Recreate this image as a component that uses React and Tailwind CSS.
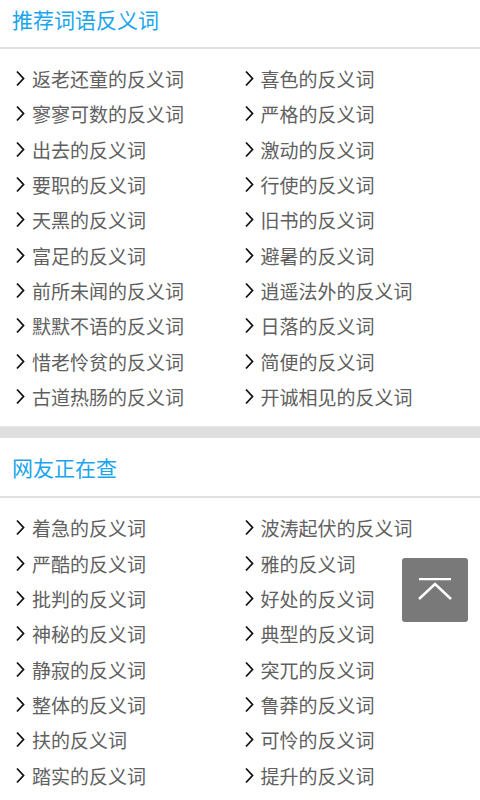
const recommended = [
  "返老还童", "喜色",
  "寥寥可数", "严格",
  "出去", "激动",
  "要职", "行使",
  "天黑", "旧书",
  "富足", "避暑",
  "前所未闻", "逍遥法外",
  "默默不语", "日落",
  "惜老怜贫", "简便",
  "古道热肠", "开诚相见",
];

const searching = [
  "着急", "波涛起伏",
  "严酷", "雅",
  "批判", "好处",
  "神秘", "典型",
  "静寂", "突兀",
  "整体", "鲁莽",
  "扶", "可怜",
  "踏实", "提升",
];

function Chevron() {
  return (
    <svg width="10" height="17" viewBox="0 0 10 17" className="shrink-0">
      <path d="M2 1.5 L8.5 8.5 L2 15.5" fill="none" stroke="#111" strokeWidth="1.8" />
    </svg>
  );
}

function WordGrid({ words }) {
  return (
    <ul className="grid grid-cols-2 pl-[15px] pr-2 pt-3 pb-3">
      {words.map((w) => (
        <li key={w} className="h-[35.33px] flex items-center gap-[7px]">
          <Chevron />
          <a href="#" className="text-[19px] text-[#606060] leading-none">
            {w}的反义词
          </a>
        </li>
      ))}
    </ul>
  );
}

export default function App() {
  return (
    <div
      className="w-[480px] h-[800px] overflow-hidden bg-white relative"
      style={{ fontFamily: '"Noto Sans CJK SC", "Noto Sans", sans-serif' }}
    >
      <section>
        <h2 className="h-[49px] pl-3 pt-[4px] text-[21px] text-[#1ba5ee] border-b-2 border-[#e0e0e0] leading-[30px]">
          推荐词语反义词
        </h2>
        <WordGrid words={recommended} />
      </section>

      <div className="h-[12px] bg-[#dfdfdf] border-t border-[#e8e8e8]" />

      <section>
        <h2 className="h-[60px] pl-3 flex items-center text-[21px] text-[#1ba5ee] border-b-2 border-[#e0e0e0]">
          网友正在查
        </h2>
        <WordGrid words={searching} />
      </section>

      {/* back to top */}
      <button className="absolute left-[402px] top-[558px] w-[66px] h-[64px] bg-[#797979] rounded-[3px] flex items-center justify-center">
        <svg width="34" height="24" viewBox="0 0 34 24">
          <path d="M1 1 H33" stroke="#fff" strokeWidth="2.5" />
          <path d="M1 21 L17 6 L33 21" fill="none" stroke="#fff" strokeWidth="2.5" />
        </svg>
      </button>
    </div>
  );
}
